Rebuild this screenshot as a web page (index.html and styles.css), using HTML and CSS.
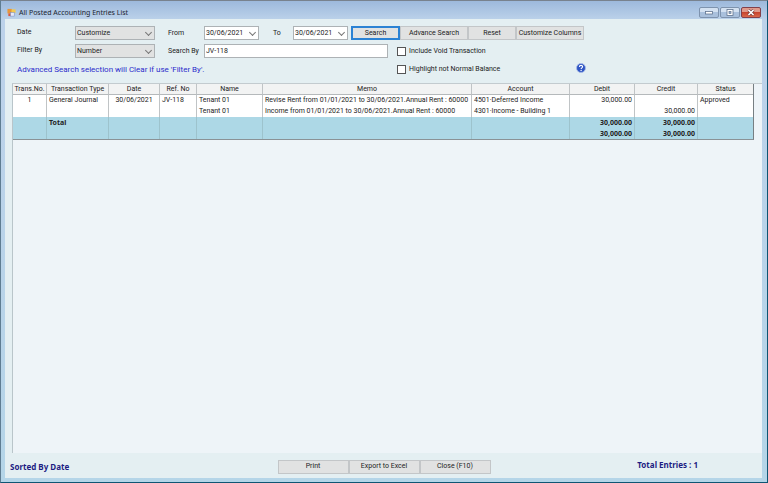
FILE: index.html
```
<!DOCTYPE html>
<html lang="en">
  <head>
    <meta charset="UTF-8" />
    <meta name="viewport" content="width=device-width, initial-scale=1.0" />
    <title>All Posted Accounting Entries List</title>
    <link rel="stylesheet" href="styles.css" />
  </head>
  <body>
    <div class="window">
      <header class="titlebar">
        <svg class="app-icon" viewBox="0 0 10 10">
          <rect x="0.5" y="1" width="5" height="5" fill="#e8963a" />
          <rect x="5" y="1.5" width="4.5" height="4" fill="#f3c94f" />
          <rect x="1.5" y="6" width="3" height="3" fill="#d9593f" />
          <rect x="4" y="5" width="4" height="4" fill="#e6eafa" stroke="#7c8fc4" stroke-width="0.6" />
        </svg>
        <h1>All Posted Accounting Entries List</h1>
        <div class="caption-buttons">
          <button type="button" class="caption" aria-label="Minimize">
            <svg viewBox="0 0 18 9"><rect x="5.5" y="3.5" width="7" height="2.5" fill="#fff" stroke="#60748f" stroke-width="0.8" /></svg>
          </button>
          <button type="button" class="caption" aria-label="Maximize">
            <svg viewBox="0 0 18 9"><rect x="6" y="1.5" width="6" height="6" fill="#fff" stroke="#60748f" stroke-width="0.8" /><rect x="8" y="3.5" width="2" height="2" fill="#9db4d0" stroke="#60748f" stroke-width="0.7" /></svg>
          </button>
          <button type="button" class="caption close" aria-label="Close">
            <svg viewBox="0 0 18 9"><path d="M6.5 2l5 5M11.5 2l-5 5" stroke="#6d3a3c" stroke-width="3" /><path d="M6.5 2l5 5M11.5 2l-5 5" stroke="#fff" stroke-width="1.7" /></svg>
          </button>
        </div>
      </header>

      <main class="client">
        <form class="filters">
          <div class="row">
            <label class="name" for="period">Date</label>
            <span class="combo">
              <select id="period"><option>Customize</option></select>
            </span>
            <label class="from" for="from">From</label>
            <span class="combo date"><input id="from" type="text" value="30/06/2021" /></span>
            <label class="to" for="to">To</label>
            <span class="combo date"><input id="to" type="text" value="30/06/2021" /></span>
            <div class="actions">
              <button type="button" class="btn default">Search</button>
              <button type="button" class="btn wide">Advance Search</button>
              <button type="button" class="btn">Reset</button>
              <button type="button" class="btn wide">Customize Columns</button>
            </div>
          </div>
          <div class="row">
            <label class="name" for="field">Filter By</label>
            <span class="combo">
              <select id="field"><option>Number</option></select>
            </span>
            <label class="from" for="term">Search By</label>
            <input id="term" class="term" type="text" value="JV-118" />
            <label class="check"><input type="checkbox" />Include Void Transaction</label>
          </div>
          <div class="row">
            <p class="hint">Advanced Search selection will Clear if use 'Filter By'.</p>
            <label class="check"><input type="checkbox" />Highlight not Normal Balance</label>
            <button type="button" class="help" aria-label="Help">
              <svg viewBox="0 0 10 10">
                <circle cx="5" cy="5" r="4.5" fill="#2f55c4" stroke="#a9bce8" stroke-width="0.8" />
                <path d="M3.4 3.9C3.4 1.8 6.7 1.9 6.6 3.8C6.5 4.9 5.1 4.9 5.1 6.1" fill="none" stroke="#fff" stroke-width="1.1" />
                <circle cx="5.1" cy="7.5" r="0.7" fill="#fff" />
              </svg>
            </button>
          </div>
        </form>

        <div class="grid">
          <table>
            <colgroup>
              <col class="c-no" />
              <col class="c-type" />
              <col class="c-date" />
              <col class="c-ref" />
              <col class="c-name" />
              <col class="c-memo" />
              <col class="c-account" />
              <col class="c-debit" />
              <col class="c-credit" />
              <col class="c-status" />
            </colgroup>
            <thead>
              <tr>
                <th>Trans.No.</th>
                <th>Transaction Type</th>
                <th>Date</th>
                <th>Ref. No</th>
                <th>Name</th>
                <th>Memo</th>
                <th>Account</th>
                <th>Debit</th>
                <th>Credit</th>
                <th>Status</th>
              </tr>
            </thead>
            <tbody>
              <tr>
                <td class="mid">1</td>
                <td>General Journal</td>
                <td class="mid">30/06/2021</td>
                <td>JV-118</td>
                <td>Tenant 01</td>
                <td>Revise Rent from 01/01/2021 to 30/06/2021.Annual Rent : 60000</td>
                <td>4501·Deferred Income</td>
                <td class="num">30,000.00</td>
                <td></td>
                <td>Approved</td>
              </tr>
              <tr>
                <td></td>
                <td></td>
                <td></td>
                <td></td>
                <td>Tenant 01</td>
                <td>Income from 01/01/2021 to 30/06/2021.Annual Rent : 60000</td>
                <td>4301·Income - Building 1</td>
                <td></td>
                <td class="num">30,000.00</td>
                <td></td>
              </tr>
            </tbody>
            <tfoot>
              <tr>
                <td></td>
                <td>Total</td>
                <td></td>
                <td></td>
                <td></td>
                <td></td>
                <td></td>
                <td class="num">30,000.00</td>
                <td class="num">30,000.00</td>
                <td></td>
              </tr>
              <tr>
                <td></td>
                <td></td>
                <td></td>
                <td></td>
                <td></td>
                <td></td>
                <td></td>
                <td class="num">30,000.00</td>
                <td class="num">30,000.00</td>
                <td></td>
              </tr>
            </tfoot>
          </table>
        </div>

        <footer class="bottom">
          <strong>Sorted By Date</strong>
          <div class="actions">
            <button type="button" class="btn wide">Print</button>
            <button type="button" class="btn wide">Export to Excel</button>
            <button type="button" class="btn wide">Close (F10)</button>
          </div>
          <strong class="count">Total Entries : 1</strong>
        </footer>
      </main>
    </div>
  </body>
</html>
```
FILE: styles.css
```
* {
  box-sizing: border-box;
}

body {
  margin: 0;
  font-family: Roboto, "Noto Sans", sans-serif;
  font-size: 7px;
  line-height: 11px;
  color: #222;
}

button,
input,
select {
  font: inherit;
  color: inherit;
  margin: 0;
}

/* window frame */
.window {
  display: flex;
  flex-direction: column;
  min-height: 100vh;
  padding: 0 5px 4px 4px;
  background: linear-gradient(#9db9dc, #bcd2ea 19px, #bcd2ea 70px, #b4d5e8);
  border-top: 1px solid #78828e;
  border-left: 1px solid #5f7d92;
  border-right: 1px solid #0e5573;
  border-bottom: 1px solid #0e5573;
}

.titlebar {
  display: flex;
  align-items: center;
  height: 18px;
  padding: 4px 0 0 2px;
}

.app-icon {
  width: 9px;
  height: 9px;
}

.titlebar h1 {
  flex: 1;
  margin: 0 0 0 3px;
  font-family: "Noto Sans", sans-serif;
  font-size: 7px;
  font-weight: normal;
  color: #1b2430;
}

.caption-buttons {
  display: flex;
  gap: 1px;
  padding-right: 1px;
}

.caption {
  display: flex;
  width: 20px;
  height: 11px;
  padding: 0;
  border: 1px solid #7e93ae;
  border-radius: 2px;
  background: linear-gradient(#d3e1f1 50%, #a9c0dc 50%);
}

.caption svg {
  width: 100%;
  height: 100%;
}

.caption.close {
  border-color: #83404a;
  background: linear-gradient(#e09a8c 45%, #c6422c 45%, #d9684c);
}

.client {
  flex: 1;
  display: flex;
  flex-direction: column;
  background: #e4eff2;
}

/* search bar */
.filters {
  padding: 5px 0 5px 12px;
}

.row {
  display: flex;
  align-items: center;
  height: 18px;
}

.name {
  width: 58px;
  padding-bottom: 2px;
}

.from {
  width: 36px;
}

.to {
  width: 34px;
  padding-left: 14px;
}

.combo {
  position: relative;
  width: 80px;
  margin-right: 13px;
}

.combo.date {
  width: 55px;
  margin-right: 0;
}

.combo::after {
  content: "";
  position: absolute;
  top: 4px;
  right: 4px;
  width: 4px;
  height: 4px;
  border: solid #777;
  border-width: 0 1px 1px 0;
  transform: rotate(45deg);
  pointer-events: none;
}

.combo select,
.combo input,
.term {
  display: block;
  width: 100%;
  height: 14px;
  padding: 0 1px;
  border: 1px solid #adb2b5;
  border-radius: 0;
  background: #fff;
}

.combo select {
  appearance: none;
  background: #e1e2e2;
}

.row .term {
  width: 184px;
  margin-right: 9px;
}

.actions {
  display: flex;
}

.row .actions {
  margin-left: 3px;
}

.btn {
  width: 48px;
  height: 14px;
  padding: 0;
  border: 1px solid #c3c6c8;
  background: #e1e2e2;
}

.btn.wide {
  width: 68px;
}

.btn.default {
  width: 49px;
  border: 2px solid #2b82d4;
}

.check {
  display: flex;
  align-items: center;
  gap: 3px;
  width: 179px;
}

.check input {
  appearance: none;
  width: 9px;
  height: 9px;
  border: 1px solid #555;
  background: #fff;
}

.hint {
  width: 380px;
  margin: 0;
  font-size: 8px;
  color: #2b2bcb;
}

.help {
  display: flex;
  padding: 0 0 3px;
  border: 0;
  background: none;
}

.help svg {
  width: 10px;
  height: 10px;
}

/* entries grid */
.grid {
  flex: 1;
  margin-left: 7px;
  padding-right: 8px;
  border-top: 1px solid #c3cbcf;
  border-left: 1px solid #b9c5ca;
  background: #eef4f8;
}

table {
  width: 100%;
  table-layout: fixed;
  border-collapse: separate;
  border-spacing: 0;
  border-right: 1px solid #777f83;
  border-bottom: 1px solid #8a9296;
  background: #fff;
}

.c-no { width: 34px; }
.c-type { width: 62px; }
.c-date { width: 51px; }
.c-ref { width: 37px; }
.c-name { width: 66px; }
.c-account { width: 98px; }
.c-debit { width: 65px; }
.c-credit { width: 63px; }
.c-status { width: 55px; }

th,
td {
  height: 11px;
  padding: 0 2px;
  border-right: 1px solid #c0c4c6;
  text-align: left;
  white-space: nowrap;
}

th {
  padding: 0;
  border-bottom: 1px solid #b5b9bb;
  background: #f2f3f3;
  font-weight: normal;
  line-height: 10px;
  text-align: center;
}

th:last-child,
td:last-child {
  border-right: 0;
}

.mid {
  text-align: center;
}

.num {
  text-align: right;
}

tfoot td {
  border-color: #9dc3cd;
  background: #add8e6;
  font-family: "Noto Sans", sans-serif;
  font-weight: bold;
}

/* status line */
.bottom {
  display: grid;
  grid-template-columns: 1fr auto 1fr;
  align-items: center;
  height: 25px;
  padding: 2px 4px 0 5px;
}

.bottom strong {
  font-family: "Noto Sans", sans-serif;
  font-size: 8px;
  color: #1c1c82;
}

.bottom .btn {
  width: 71px;
}

.bottom .count {
  padding: 0 60px 5px 0;
  text-align: right;
}
```
